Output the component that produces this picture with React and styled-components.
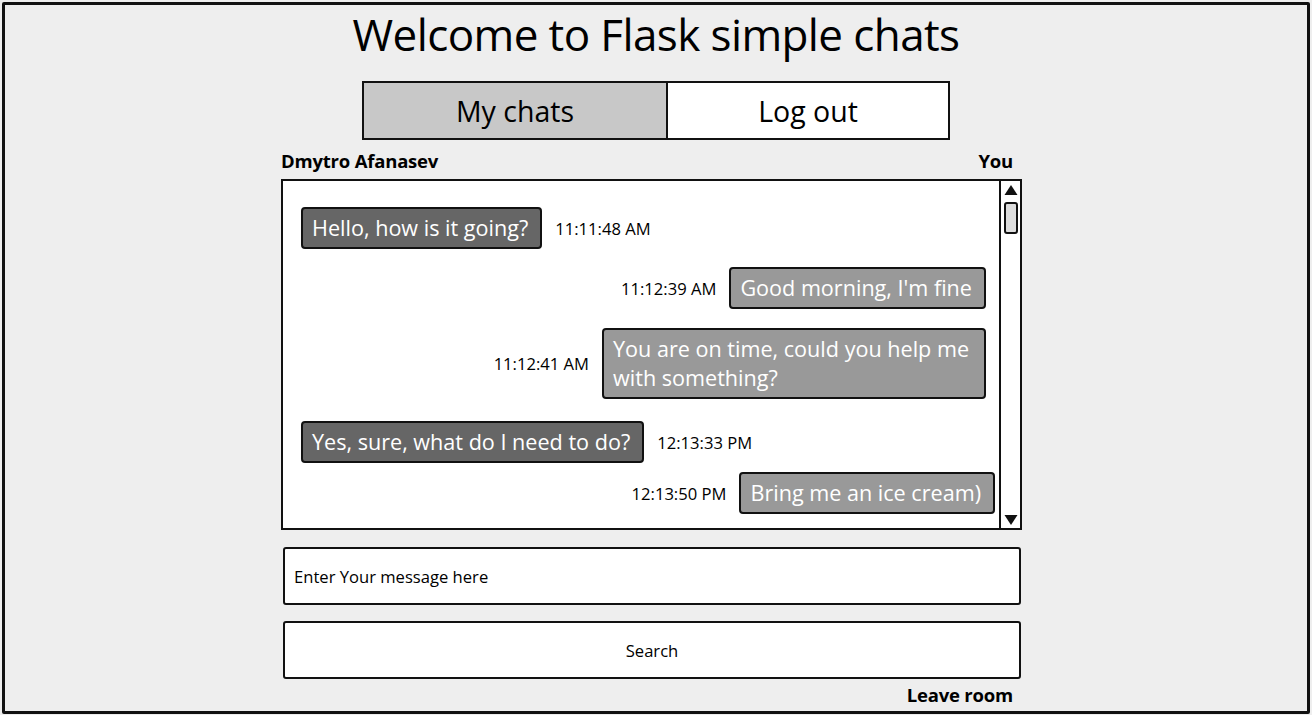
import React from "react";
import styled, { createGlobalStyle } from "styled-components";

const Global = createGlobalStyle`
  html, body { margin: 0; padding: 0; background: #eeeeee; }
  body { font-family: "Open Sans", "Noto Sans", sans-serif; color: #000; }
  * { box-sizing: border-box; }
`;

const Frame = styled.div`
  margin: 2px 0 0 2px;
  width: 1308px;
  height: 712px;
  border: 3px solid #111;
  border-radius: 2px;
  background: #eeeeee;
  display: flex;
  flex-direction: column;
  align-items: center;
  overflow: hidden;
`;

const Title = styled.h1`
  margin: 0;
  font-weight: 400;
  font-size: 44px;
  line-height: 58px;
  letter-spacing: -0.6px;
`;

const Tabs = styled.div`
  margin-top: 18px;
  display: flex;
  width: 588px;
  height: 59px;
  border: 2px solid #111;
`;

const Tab = styled.div`
  flex: 0 0 ${(p) => p.$w}px;
  display: flex;
  align-items: center;
  justify-content: center;
  font-size: 28.5px;
  background: ${(p) => (p.$active ? "#c8c8c8" : "#ffffff")};
  border-right: ${(p) => (p.$divider ? "2px solid #111" : "none")};
`;

const Column = styled.div`
  width: 741px;
  display: flex;
  flex-direction: column;
  margin-right: 9px;
`;

const LabelRow = styled.div`
  display: flex;
  justify-content: space-between;
  padding-right: 9px;
  margin-top: ${(p) => p.$mt || 0}px;
  height: ${(p) => p.$h || 22}px;
  align-items: center;
  font-weight: 700;
  font-size: 18.5px;
  letter-spacing: -0.2px;
`;

const ChatBox = styled.div`
  margin-top: 8px;
  height: 351px;
  border: 2px solid #111;
  background: #fff;
  display: flex;
`;

const Messages = styled.div`
  flex: 1;
  display: flex;
  flex-direction: column;
  padding: 26px 0 0 18px;
  overflow: hidden;
`;

const Row = styled.div`
  display: flex;
  align-items: center;
  justify-content: ${(p) => (p.$mine ? "flex-end" : "flex-start")};
  gap: 13px;
  margin-top: ${(p) => p.$mt || 0}px;
  padding-right: ${(p) => p.$pr || 0}px;
`;

const Bubble = styled.div`
  background: ${(p) => (p.$dark ? "#666666" : "#999999")};
  color: #fff;
  border: 2px solid #111;
  border-radius: 4px;
  padding: 4px 12px 5px 9px;
  font-size: 21.6px;
  line-height: 29px;
  white-space: ${(p) => (p.$w ? "normal" : "nowrap")};
  width: ${(p) => (p.$w ? `${p.$w}px` : "auto")};
`;

const Time = styled.span`
  font-size: 16.6px;
  white-space: nowrap;
`;

const Scrollbar = styled.div`
  width: 21px;
  border-left: 2px solid #111;
  display: flex;
  flex-direction: column;
  align-items: center;
  justify-content: space-between;
  padding: 2px 0 1px;
`;

const Thumb = styled.div`
  width: 14px;
  height: 32px;
  border: 2px solid #111;
  border-radius: 3px;
  background: #ddd;
  margin-top: 6px;
`;

const ScrollTop = styled.div`
  display: flex;
  flex-direction: column;
  align-items: center;
`;

const Field = styled.div`
  margin-top: ${(p) => p.$mt}px;
  height: 58px;
  width: 738px;
  margin-left: 2px;
  border: 2px solid #111;
  border-radius: 3px;
  background: #fff;
  display: flex;
  align-items: center;
  justify-content: ${(p) => (p.$center ? "center" : "flex-start")};
  padding-left: ${(p) => (p.$center ? 0 : 9)}px;
  font-size: 16.6px;
`;

const Arrow = ({ up }) => (
  <svg width="16" height="13" viewBox="0 0 16 13">
    {up ? (
      <polygon points="1.5,12 8,2 14.5,12" fill="#111" />
    ) : (
      <polygon points="1.5,1 8,11 14.5,1" fill="#111" />
    )}
  </svg>
);

export default function App() {
  return (
    <>
      <Global />
      <Frame>
        <Title>Welcome to Flask simple chats</Title>
        <Tabs>
          <Tab $w={304} $active $divider>My chats</Tab>
          <Tab $w={280}>Log out</Tab>
        </Tabs>
        <Column>
          <LabelRow $mt={9}>
            <span>Dmytro Afanasev</span>
            <span>You</span>
          </LabelRow>
          <ChatBox>
            <Messages>
              <Row>
                <Bubble $dark>Hello, how is it going?</Bubble>
                <Time>11:11:48 AM</Time>
              </Row>
              <Row $mine $mt={18} $pr={13}>
                <Time>11:12:39 AM</Time>
                <Bubble>Good morning, I'm fine</Bubble>
              </Row>
              <Row $mine $mt={19} $pr={13}>
                <Time>11:12:41 AM</Time>
                <Bubble $w={384}>You are on time, could you help me with something?</Bubble>
              </Row>
              <Row $mt={22}>
                <Bubble $dark>Yes, sure, what do I need to do?</Bubble>
                <Time>12:13:33 PM</Time>
              </Row>
              <Row $mine $mt={9} $pr={4}>
                <Time>12:13:50 PM</Time>
                <Bubble>Bring me an ice cream)</Bubble>
              </Row>
            </Messages>
            <Scrollbar>
              <ScrollTop>
                <Arrow up />
                <Thumb />
              </ScrollTop>
              <Arrow />
            </Scrollbar>
          </ChatBox>
          <Field $mt={17}>Enter Your message here</Field>
          <Field $mt={16} $center>Search</Field>
          <LabelRow $mt={2} $h={26}>
            <span />
            <span>Leave room</span>
          </LabelRow>
        </Column>
      </Frame>
    </>
  );
}
